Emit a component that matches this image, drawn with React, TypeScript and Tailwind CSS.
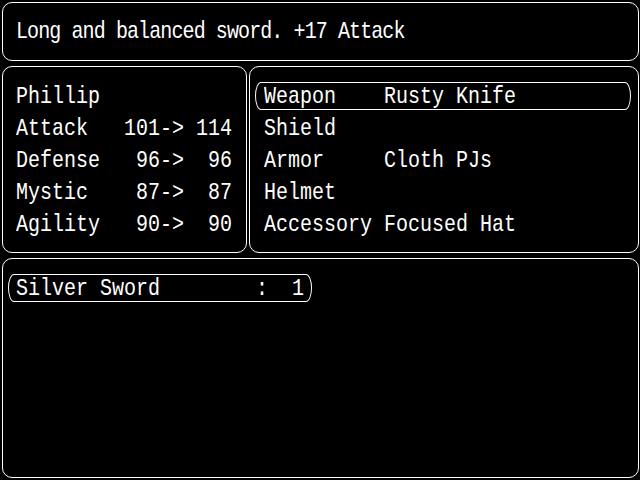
import React from 'react';

const font = { fontFamily: '"Liberation Mono", "DejaVu Sans Mono", monospace' };

const stats = [
  'Phillip',
  'Attack   101-> 114',
  'Defense   96->  96',
  'Mystic    87->  87',
  'Agility   90->  90',
];

const slots = [
  'Weapon    Rusty Knife',
  'Shield',
  'Armor     Cloth PJs',
  'Helmet',
  'Accessory Focused Hat',
];

const Row: React.FC<{ text: string }> = ({ text }) => (
  <div className="h-[32px] flex items-center whitespace-pre text-[20px] leading-none text-white scale-y-[1.2]">
    {text}
  </div>
);

const Cursor: React.FC<{ className: string }> = ({ className }) => (
  <div className={`absolute h-[28px] border border-white rounded-[6px/14px] ${className}`} />
);

const Window: React.FC<{ className?: string; children?: React.ReactNode }> = ({ className = '', children }) => (
  <div className={`relative bg-black border border-white rounded-[10px] ${className}`}>{children}</div>
);

export default function App() {
  return (
    <div className="w-[640px] h-[480px] bg-black pt-[2px] pl-[2px] pr-[1px] flex flex-col gap-[5px]" style={font}>
      <Window className="h-[59px] pl-[13px] pt-[13px]">
        <div className="h-[32px] flex items-center whitespace-pre text-[20px] leading-none text-white tracking-[-0.9px] scale-y-[1.2]">
          Long and balanced sword. +17 Attack
        </div>
      </Window>

      <div className="h-[187px] flex gap-[2px]">
        <Window className="w-[245px] pl-[13px] pt-[14px]">
          {stats.map((s) => (
            <Row key={s} text={s} />
          ))}
        </Window>
        <Window className="flex-1 pl-[14px] pt-[14px]">
          <Cursor className="top-[15px] left-[5px] right-[7px]" />
          {slots.map((s) => (
            <Row key={s} text={s} />
          ))}
        </Window>
      </div>

      <Window className="h-[220px] pl-[13px] pt-[14px]">
        <Cursor className="top-[15px] left-[5px] w-[304px]" />
        <Row text="Silver Sword        :  1" />
      </Window>
    </div>
  );
}
